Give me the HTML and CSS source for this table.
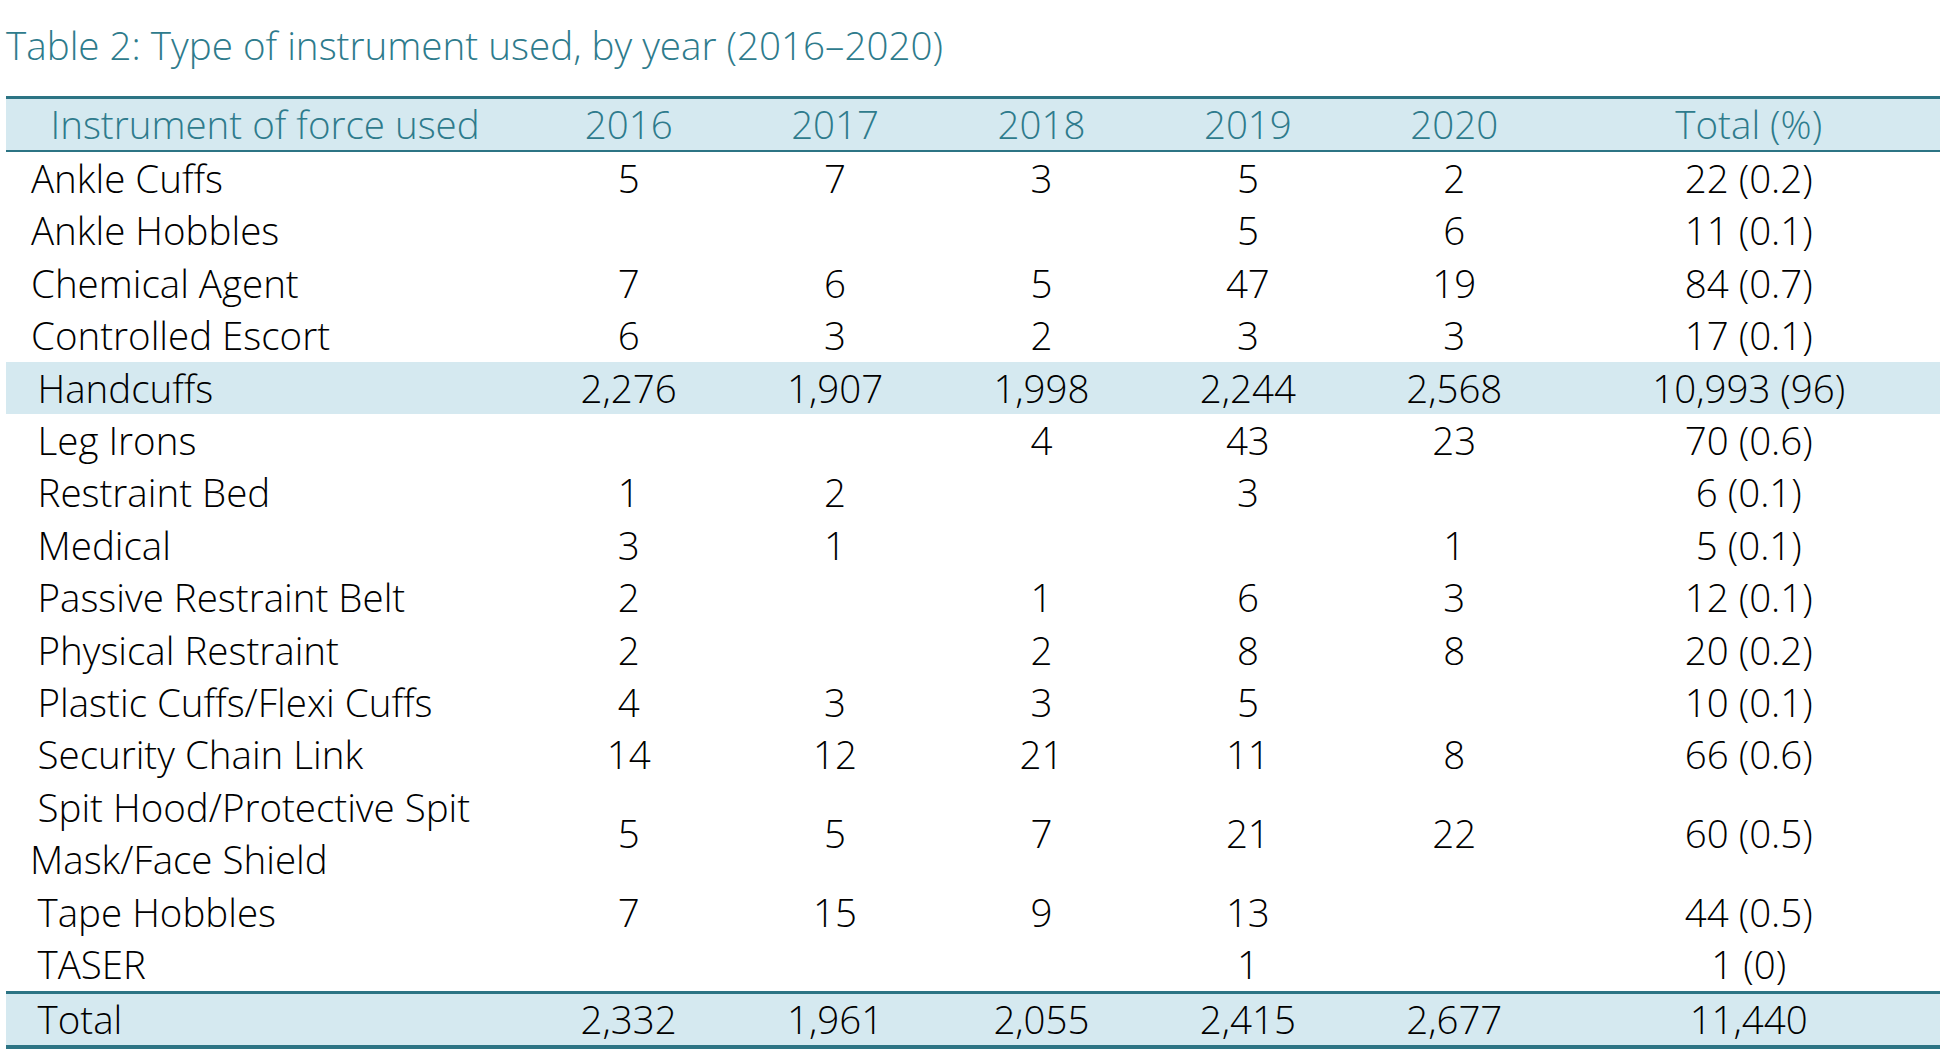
FILE: index.html
```html
<!DOCTYPE html>
<html lang="en">
<head>
<meta charset="utf-8">
<title>Table 2: Type of instrument used, by year (2016–2020)</title>
<link rel="stylesheet" href="styles.css">
</head>
<body>
<div class="page">
  <h1 class="caption">Table 2: Type of instrument used, by year (2016–2020)</h1>
  <table class="data">
    <colgroup>
      <col class="c-label">
      <col class="c-year"><col class="c-year"><col class="c-year"><col class="c-year"><col class="c-year">
      <col class="c-total">
    </colgroup>
    <thead>
      <tr>
        <th class="lbl head-lbl">Instrument of force used</th>
        <th>2016</th><th>2017</th><th>2018</th><th>2019</th><th>2020</th><th>Total (%)</th>
      </tr>
    </thead>
    <tbody>
      <tr><td class="lbl a">Ankle Cuffs</td><td>5</td><td>7</td><td>3</td><td>5</td><td>2</td><td>22 (0.2)</td></tr>
      <tr><td class="lbl a">Ankle Hobbles</td><td></td><td></td><td></td><td>5</td><td>6</td><td>11 (0.1)</td></tr>
      <tr><td class="lbl a">Chemical Agent</td><td>7</td><td>6</td><td>5</td><td>47</td><td>19</td><td>84 (0.7)</td></tr>
      <tr><td class="lbl a">Controlled Escort</td><td>6</td><td>3</td><td>2</td><td>3</td><td>3</td><td>17 (0.1)</td></tr>
      <tr class="hl"><td class="lbl b">Handcuffs</td><td>2,276</td><td>1,907</td><td>1,998</td><td>2,244</td><td>2,568</td><td>10,993 (96)</td></tr>
      <tr><td class="lbl b">Leg Irons</td><td></td><td></td><td>4</td><td>43</td><td>23</td><td>70 (0.6)</td></tr>
      <tr><td class="lbl b">Restraint Bed</td><td>1</td><td>2</td><td></td><td>3</td><td></td><td>6 (0.1)</td></tr>
      <tr><td class="lbl b">Medical</td><td>3</td><td>1</td><td></td><td></td><td>1</td><td>5 (0.1)</td></tr>
      <tr><td class="lbl b">Passive Restraint Belt</td><td>2</td><td></td><td>1</td><td>6</td><td>3</td><td>12 (0.1)</td></tr>
      <tr><td class="lbl b">Physical Restraint</td><td>2</td><td></td><td>2</td><td>8</td><td>8</td><td>20 (0.2)</td></tr>
      <tr><td class="lbl b">Plastic Cuffs/Flexi Cuffs</td><td>4</td><td>3</td><td>3</td><td>5</td><td></td><td>10 (0.1)</td></tr>
      <tr><td class="lbl b">Security Chain Link</td><td>14</td><td>12</td><td>21</td><td>11</td><td>8</td><td>66 (0.6)</td></tr>
      <tr><td class="lbl two"><span class="l1">Spit Hood/Protective Spit</span><span class="l2">Mask/Face Shield</span></td><td>5</td><td>5</td><td>7</td><td>21</td><td>22</td><td>60 (0.5)</td></tr>
      <tr><td class="lbl b">Tape Hobbles</td><td>7</td><td>15</td><td>9</td><td>13</td><td></td><td>44 (0.5)</td></tr>
      <tr><td class="lbl b">TASER</td><td></td><td></td><td></td><td>1</td><td></td><td>1 (0)</td></tr>
    </tbody>
    <tfoot>
      <tr><td class="lbl b">Total</td><td>2,332</td><td>1,961</td><td>2,055</td><td>2,415</td><td>2,677</td><td>11,440</td></tr>
    </tfoot>
  </table>
</div>
</body>
</html>
```
FILE: styles.css
```css
html, body {
  margin: 0;
  padding: 0;
  background: #ffffff;
}

body {
  font-family: "Open Sans", "Liberation Sans", sans-serif;
  font-weight: 300;
  color: #000000;
}

.page {
  padding: 19px 4px 0 6px;
}

.caption {
  margin: 0 0 24px 0;
  font-size: 38.6px;
  font-weight: 300;
  line-height: 53px;
  color: #2e7b8c;
  letter-spacing: 0;
}

.data {
  width: 1934px;
  border-collapse: collapse;
  table-layout: fixed;
  font-size: 38.5px;
}

.c-label { width: 519.5px; }
.c-year { width: 206.4px; }

.data th,
.data td {
  padding: 0;
  text-align: center;
  font-weight: 300;
  white-space: nowrap;
}

.data thead th {
  height: 51px;
  line-height: 51px;
  background: #d5e9f0;
  color: #2e7b8c;
  border-top: 3px solid #2c7484;
  border-bottom: 2px solid #2c7484;
}

.data tbody td {
  height: 52.4px;
  line-height: 52.4px;
}

.data tbody tr.hl td {
  background: #d5e9f0;
}

.data tfoot td {
  height: 51px;
  line-height: 51px;
  background: #d5e9f0;
  border-top: 3px solid #2c7484;
  border-bottom: 4px solid #2c7484;
}

.data .lbl {
  text-align: left;
}

.data .head-lbl {
  padding-left: 44.5px;
}

.data .lbl.a {
  padding-left: 25px;
}

.data .lbl.b {
  padding-left: 31.5px;
}

.data .lbl.two {
  padding-left: 0;
}

.two .l1,
.two .l2 {
  display: block;
  line-height: 52.4px;
}

.two .l1 {
  padding-left: 31.5px;
}

.two .l2 {
  padding-left: 24px;
}
```
